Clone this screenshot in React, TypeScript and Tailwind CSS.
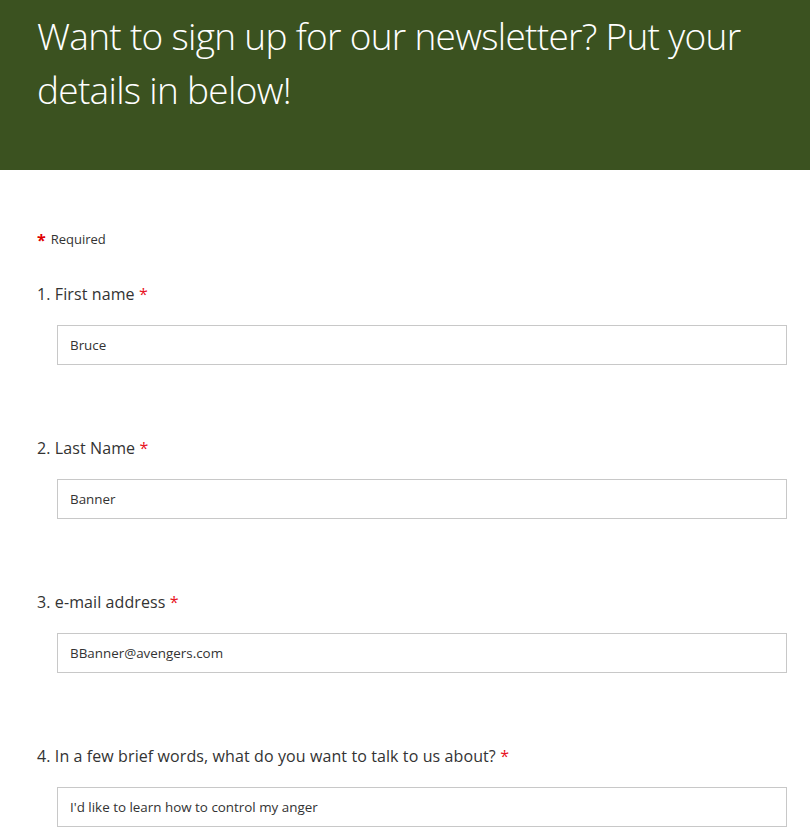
import React from "react";

const questions = [
  { n: 1, label: "First name", value: "Bruce" },
  { n: 2, label: "Last Name", value: "Banner" },
  { n: 3, label: "e-mail address", value: "BBanner@avengers.com" },
  { n: 4, label: "In a few brief words, what do you want to talk to us about?", value: "I'd like to learn how to control my anger" },
];

export default function App() {
  return (
    <div className="w-[810px] min-h-[840px] bg-white" style={{ fontFamily: '"Open Sans", "Noto Sans", sans-serif' }}>
      <div className="h-[170px] bg-[#3b5220] pl-[37px] pr-[37px] pt-[9px]">
        <h1 className="text-[37px] font-light leading-[54px] text-white tracking-[-0.7px]">
          Want to sign up for our newsletter? Put your
          <br />
          details in below!
        </h1>
      </div>
      <div className="pl-[37px] pr-[23px] pt-[60px]">
        <div className="flex items-center text-[13px] text-[#333333]">
          <span className="text-[#e00000] text-[16px] font-bold mr-[5px] leading-none">*</span>
          <span>Required</span>
        </div>
        <div className="flex flex-col gap-[72px] mt-[33px]">
          {questions.map((q) => (
            <div key={q.n}>
              <div className="text-[16px] text-[#333333] leading-[22px] tracking-[0.1px]">
                {q.n}. {q.label} <span className="text-[#e81123]">*</span>
              </div>
              <div className="ml-[20px] mt-[20px] h-[40px] border border-[#c8c8c8] flex items-center px-[12px] pt-[2px] text-[13.4px] text-[#333333]">
                {q.value}
              </div>
            </div>
          ))}
        </div>
      </div>
    </div>
  );
}
